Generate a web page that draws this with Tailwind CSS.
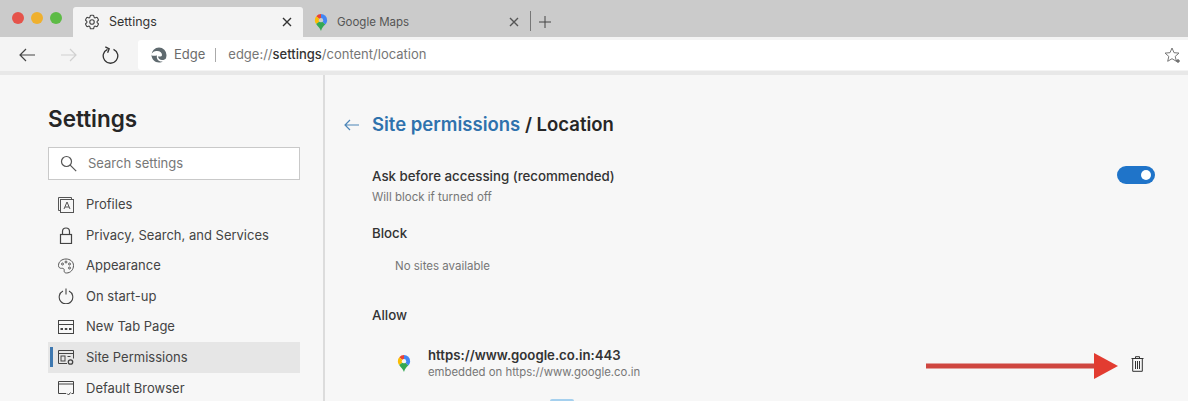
<!DOCTYPE html>
<html lang="en">
<head>
  <meta charset="UTF-8" />
  <title>Settings</title>
  <script src="https://cdn.jsdelivr.net/npm/@tailwindcss/browser@4"></script>
</head>
<body class="h-[401px] w-[1188px] overflow-hidden bg-[#f7f7f7] font-['Inter',sans-serif] text-[#333]">
  <!-- Tab strip -->
  <div class="flex h-[37px] items-end bg-[#cbcbcb]">
    <div class="flex h-[37px] w-[73px] items-center gap-[7px] pb-[2px] pl-[12px]">
      <span class="h-[12px] w-[12px] rounded-full bg-[#e5534b]"></span>
      <span class="h-[12px] w-[12px] rounded-full bg-[#efb02e]"></span>
      <span class="h-[12px] w-[12px] rounded-full bg-[#5dbb46]"></span>
    </div>
    <div class="flex h-[30px] w-[230px] items-center rounded-t-[3px] bg-[#f4f4f4] pl-[10px] pr-[11px]">
      <svg class="h-[18px] w-[18px]" viewBox="0 0 24 24" fill="none" stroke="#444" stroke-width="1.500" stroke-linejoin="round"><path d="M9.594 3.940c.09-.542.56-.94 1.110-.94h2.593c.55 0 1.020.398 1.110.94l.213 1.281c.063.374.313.686.645.87.074.04.147.083.22.127.325.196.72.257 1.075.124l1.217-.456a1.125 1.125 0 0 1 1.370.49l1.296 2.247a1.125 1.125 0 0 1-.26 1.431l-1.003.827c-.293.241-.438.613-.43.992a7.723 7.723 0 0 1 0 .255c-.008.378.137.75.43.991l1.004.827c.424.35.534.955.26 1.430l-1.298 2.247a1.125 1.125 0 0 1-1.369.491l-1.217-.456c-.355-.133-.75-.072-1.076.124a6.470 6.470 0 0 1-.22.128c-.331.183-.581.495-.644.869l-.213 1.281c-.09.543-.56.94-1.110.94h-2.594c-.55 0-1.019-.398-1.110-.94l-.213-1.281c-.062-.374-.312-.686-.644-.87a6.520 6.520 0 0 1-.22-.127c-.325-.196-.72-.257-1.076-.124l-1.217.456a1.125 1.125 0 0 1-1.369-.49l-1.297-2.247a1.125 1.125 0 0 1 .26-1.431l1.004-.827c.292-.24.437-.613.43-.991a6.932 6.932 0 0 1 0-.255c.007-.38-.138-.751-.43-.992l-1.004-.827a1.125 1.125 0 0 1-.26-1.430l1.297-2.247a1.125 1.125 0 0 1 1.370-.491l1.216.456c.356.133.751.072 1.076-.124.072-.044.146-.086.22-.128.332-.183.582-.495.644-.869l.214-1.280Z"/><circle cx="12" cy="12" r="3"/></svg>
      <span class="ml-[8px] text-[12.500px] text-[#333]">Settings</span>
      <svg class="ml-auto h-[10px] w-[10px]" viewBox="0 0 10 10" stroke="#333" stroke-width="1.400"><path d="M1 1l8 8M9 1l-8 8"/></svg>
    </div>
    <div class="flex h-[30px] w-[227px] items-center pl-[11px] pr-[11px]">
      <svg class="h-[17px] w-[14px]" viewBox="0 0 14 18"><path d="M7 0a6.500 6.500 0 0 1 6.500 6.500c0 2-1 3.400-2 4.600L7 7z" fill="#4285f4"/><path d="M7 0a6.500 6.500 0 0 0-5 2.300L7 7z" fill="#ea4335"/><path d="M2 2.300A6.500 6.500 0 0 0 .5 6.500c0 1.600.6 2.800 1.400 4L7 7z" fill="#fbbc04"/><path d="M1.900 10.500C3.500 13 6 14.500 7 18c1-3.500 2.500-5 4.500-6.900L7 7z" fill="#34a853"/><circle cx="7" cy="6.500" r="2.300" fill="#cbcbcb"/></svg>
      <span class="ml-[9px] pt-px text-[11.500px] text-[#555]">Google Maps</span>
      <svg class="ml-auto h-[10px] w-[10px]" viewBox="0 0 10 10" stroke="#555" stroke-width="1.400"><path d="M1 1l8 8M9 1l-8 8"/></svg>
    </div>
    <div class="mb-[6px] h-[20px] w-px bg-[#777]"></div>
    <svg class="mb-[9px] ml-[8px] h-[12px] w-[12px]" viewBox="0 0 12 12" stroke="#444" stroke-width="1"><path d="M6 0v12M0 6h12"/></svg>
  </div>

  <!-- Toolbar -->
  <div class="flex h-[34px] items-center bg-[#f4f4f4] pt-[2px]">
    <div class="flex w-[138px] items-center pl-[19px]">
      <svg class="h-[14px] w-[16px]" viewBox="0 0 16 14" fill="none" stroke="#444" stroke-width="1.200"><path d="M16 7H1M7 1L1 7l6 6"/></svg>
      <svg class="ml-[26px] h-[14px] w-[16px]" viewBox="0 0 16 14" fill="none" stroke="#d0d0d0" stroke-width="1.200"><path d="M0 7h15M9 1l6 6-6 6"/></svg>
      <svg class="ml-[25px] h-[18px] w-[17px]" viewBox="0 0 17 18" fill="none" stroke="#333" stroke-width="1.300"><path d="M5.500 3.300a7.300 7.300 0 1 0 6 0"/><path d="M1.800 1.300l3.900 2-1.600 3.900" transform="translate(1.500 -.5)"/></svg>
    </div>
    <div class="flex h-[30px] flex-1 items-center rounded-l-[3px] bg-white pl-[13px] pr-[7px]">
      <svg class="h-[16px] w-[16px]" viewBox="0 0 16 16"><path d="M8 .5A7.500 7.500 0 0 0 .5 8c0-2.500 3-4 5.500-4 3.300 0 5 2 5 4 0 1-1 1.600-2.500 1.600-1 0-1.500-.3-1.500-.3 0 2.400 2 3.700 4 3.700 2 0 3.300-.8 4-1.800C15.300 9.800 15.500 9 15.500 8A7.500 7.500 0 0 0 8 .5z" fill="#5f6a6f"/><path d="M.5 8c0 4 3.300 7.500 7.500 7.500 1.600 0 2.800-.4 3.700-1-3.700.7-6.700-2.500-5.700-6-1.800 0-4 1-5.500-.5z" fill="#5f6a6f"/></svg>
      <span class="ml-[7px] text-[13px] text-[#6b6b6b]">Edge</span>
      <span class="ml-[10px] h-[14px] w-px bg-[#aaa]"></span>
      <span class="ml-[12px] text-[13px] text-[#767676]">edge://<span class="font-medium text-[#333]">settings</span>/content/location</span>
      <svg class="ml-auto h-[17px] w-[17px]" viewBox="0 0 17 17" fill="none" stroke="#777" stroke-width="1"><path d="M8 1l2 4.700 5 .4-3.800 3.300 1.200 4.900L8 11.700l-4.300 2.600 1.100-4.900L1 6.100l5-.4z"/><path d="M14 12v4M12 14h4" stroke="#444"/></svg>
    </div>
  </div>
  <div class="h-[4px] bg-[#e8e8e8]"></div>

  <div class="relative flex h-[326px]">
    <!-- Sidebar -->
    <aside class="h-full w-[325px] shrink-0 border-r-2 border-[#dcdcdc] pl-[48px] pr-[23px]">
      <h1 class="pt-[28px] text-[22.500px] leading-[32px] font-semibold text-[#262626]">Settings</h1>
      <div class="mt-[12px] flex h-[33px] w-[252px] items-center border border-[#c9c9c9] bg-white pl-[11px]">
        <svg class="h-[17px] w-[17px]" viewBox="0 0 17 17" fill="none" stroke="#555" stroke-width="1.200"><circle cx="6.500" cy="6.500" r="5"/><path d="M10.200 10.200l6 6"/></svg>
        <span class="ml-[11px] text-[13px] text-[#777]">Search settings</span>
      </div>
      <nav class="mt-[9.400px] flex w-[252px] flex-col text-[13px] text-[#444]">
        <a class="flex h-[30.600px] items-center pl-[10px]">
          <svg class="h-[16px] w-[16px]" viewBox="0 0 16 16" fill="none" stroke="#555" stroke-width="1"><rect x="2.500" y="2.500" width="13" height="13"/><path d="M2.500 13.500H.5V.5h13v2"/><path d="M6 12l3-7 3 7M7 10h4"/></svg>
          <span class="ml-[12px]">Profiles</span>
        </a>
        <a class="flex h-[30.600px] items-center pl-[10px]">
          <svg class="h-[17px] w-[16px]" viewBox="0 0 16 17" fill="none" stroke="#444" stroke-width="1.200"><rect x="2.500" y="7.500" width="11" height="9"/><path d="M4.500 7.500V4.500a3.500 3.500 0 0 1 7 0v3"/></svg>
          <span class="ml-[12px]">Privacy, Search, and Services</span>
        </a>
        <a class="flex h-[30.600px] items-center pl-[10px]">
          <svg class="h-[16px] w-[16px]" viewBox="0 0 16 16" fill="none" stroke="#555" stroke-width="1"><path d="M8 1C4 1 .5 3.500.5 7.500c0 2 1.500 3 3 2.800 1.800-.2 3 .6 2.700 2.400-.2 1.500.8 2.300 2.300 2.300 4 0 7-3.300 7-7.500C15.500 3.500 12 1 8 1z"/><circle cx="4.500" cy="6" r="1"/><circle cx="8" cy="4" r="1"/><circle cx="11.500" cy="6" r="1"/><circle cx="11.500" cy="10" r="1"/></svg>
          <span class="ml-[12px]">Appearance</span>
        </a>
        <a class="flex h-[30.600px] items-center pl-[10px]">
          <svg class="h-[16px] w-[16px]" viewBox="0 0 16 16" fill="none" stroke="#444" stroke-width="1.100"><path d="M5 3a6.800 6.800 0 1 0 6 0M8 .5v6"/></svg>
          <span class="ml-[12px]">On start-up</span>
        </a>
        <a class="flex h-[30.600px] items-center pl-[10px]">
          <svg class="h-[14px] w-[16px]" viewBox="0 0 16 14" fill="none" stroke="#444" stroke-width="1"><rect x=".5" y=".5" width="15" height="13"/><path d="M.5 4.500h15"/><path d="M2.500 9h2.500M6.800 9h2.500M11 9h2.500" stroke-width="2.200"/></svg>
          <span class="ml-[12px]">New Tab Page</span>
        </a>
        <a class="relative flex h-[30.600px] items-center bg-[#e6e6e6] pl-[10px]">
          <span class="absolute left-[2px] top-[5px] h-[20px] w-[3px] bg-[#3e78b0]"></span>
          <svg class="h-[15px] w-[16px]" viewBox="0 0 16 15" fill="none" stroke="#444" stroke-width="1"><path d="M9 13.500H.5V.5h15v8"/><path d="M.5 3.500h15"/><rect x="3" y="6" width="4" height="5"/><path d="M9.500 6.500h3"/><circle cx="12.500" cy="12" r="2.200" stroke-width="1.300"/></svg>
          <span class="ml-[12px]">Site Permissions</span>
        </a>
        <a class="flex h-[30.600px] items-center pl-[10px]">
          <svg class="h-[15px] w-[16px]" viewBox="0 0 16 15" fill="none" stroke="#444" stroke-width="1"><path d="M8 12.500H.5V.5h15v12h-2M.5 3h15"/><path d="M9 12.500l1.500 1.500 2-2.500"/></svg>
          <span class="ml-[12px]">Default Browser</span>
        </a>
      </nav>
    </aside>

    <!-- Main panel -->
    <main class="relative flex-1 pl-[47px] pr-[33px]">
      <div class="relative box-content flex h-[32px] items-center pt-[34px]">
        <svg class="absolute left-[-28px] top-[44px] h-[12px] w-[15px]" viewBox="0 0 15 12" fill="none" stroke="#4d86b8" stroke-width="1.200"><path d="M15 6H1M6 1L1 6l5 5"/></svg>
        <h2 class="text-[18.500px] font-semibold text-[#262626]"><span class="text-[#2f72ad]">Site permissions</span> / Location</h2>
      </div>
      <div class="mt-[25px] flex items-start justify-between">
        <div>
          <p class="text-[13.300px] leading-[20px] font-medium text-[#333]">Ask before accessing (recommended)</p>
          <p class="mt-[3px] text-[11.500px] leading-[16px] text-[#767676]">Will block if turned off</p>
        </div>
        <span class="flex h-[18px] w-[38px] items-center justify-end rounded-full bg-[#1f74c9] pr-[4px]"><span class="h-[10px] w-[10px] rounded-full bg-white"></span></span>
      </div>
      <p class="mt-[18px] text-[13.300px] leading-[20px] font-medium text-[#333]">Block</p>
      <p class="mt-[15px] pl-[23px] text-[11.500px] leading-[16px] text-[#767676]">No sites available</p>
      <p class="mt-[31px] text-[13.300px] leading-[20px] font-medium text-[#333]">Allow</p>
      <div class="mt-[22px] flex items-center pl-[25px]">
        <svg class="h-[17px] w-[14px]" viewBox="0 0 14 18"><path d="M7 0a6.500 6.500 0 0 1 6.500 6.500c0 2-1 3.400-2 4.600L7 7z" fill="#4285f4"/><path d="M7 0a6.500 6.500 0 0 0-5 2.300L7 7z" fill="#ea4335"/><path d="M2 2.300A6.500 6.500 0 0 0 .5 6.500c0 1.600.6 2.800 1.400 4L7 7z" fill="#fbbc04"/><path d="M1.900 10.500C3.500 13 6 14.500 7 18c1-3.500 2.500-5 4.500-6.900L7 7z" fill="#34a853"/><circle cx="7" cy="6.500" r="2.300" fill="#f7f7f7"/></svg>
        <div class="ml-[17px]">
          <p class="text-[13.200px] leading-[17px] font-semibold text-[#333]">https://www.google.co.in:443</p>
          <p class="text-[11.350px] leading-[16px] text-[#767676]">embedded on https://www.google.co.in</p>
        </div>
        <svg class="ml-auto mr-[11px] h-[16px] w-[13px]" viewBox="0 0 13 16" fill="none" stroke="#333" stroke-width="1"><path d="M.5 2.500h12M4.500 2.500V.7h4v1.800M1.700 2.500v12.800h9.600V2.500M4.500 5v8M6.500 5v8M8.500 5v8"/></svg>
      </div>
      <!-- annotation arrow drawn over the screenshot -->
      <svg class="absolute left-[601px] top-[276px] h-[30px] w-[196px]" viewBox="0 0 196 30"><path d="M0 15h170" stroke="#cf4640" stroke-width="5"/><path d="M168 2l24 13-24 13z" fill="#e23c31"/></svg>
      <!-- scrolled off edge of the next row -->
      <div class="absolute left-[225px] top-[324px] h-[2px] w-[24px] rounded-t-[12px] bg-[#a5d0ee]"></div>
    </main>
  </div>
</body>
</html>
